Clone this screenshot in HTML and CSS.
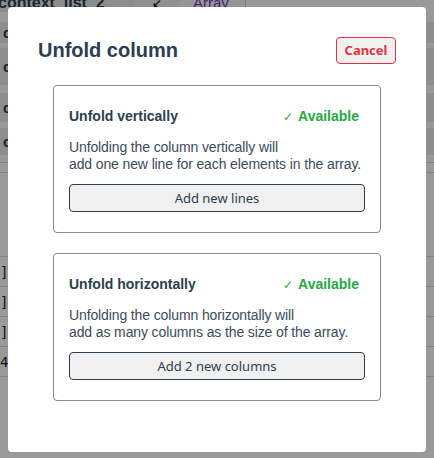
FILE: index.html
```html
<!DOCTYPE html>
<html>
<head>
<meta charset="utf-8">
<link rel="stylesheet" href="styles.css">
</head>
<body>
<div class="table">
  <div class="row r-head">
    <div class="cell c1"><span class="head-text">context_list_2</span></div>
    <div class="cell c2"><span class="arrow">↙</span></div>
    <div class="cell c3"><span class="type">Array</span></div>
  </div>
  <div class="row gap h10"></div>
  <div class="row shade h21"><span class="stub">co</span></div>
  <div class="row gap h5"></div>
  <div class="row shade h37"><span class="stub">c</span></div>
  <div class="row gap h8"></div>
  <div class="row shade h29"><span class="stub">c</span></div>
  <div class="row gap h6"></div>
  <div class="row shade h27"><span class="stub">c</span></div>
  <div class="row gap h8 line"></div>
  <div class="row gap h10 line"></div>
  <div class="row gap h84 line"></div>
  <div class="row gap h30 line"><span class="stub br">]</span></div>
  <div class="row gap h30 line"><span class="stub br">]</span></div>
  <div class="row gap h30 line"><span class="stub br">]</span></div>
  <div class="row gap h30 line"><span class="stub br">4 ]</span></div>
</div>

<div class="overlay">
  <div class="modal">
    <div class="modal-header">
      <h2 class="modal-title">Unfold column</h2>
      <button class="btn btn-cancel">Cancel</button>
    </div>
    <div class="cards">
      <div class="card">
        <div class="card-head">
          <span class="card-title">Unfold vertically</span>
          <span class="status"><span class="check">✓</span> Available</span>
        </div>
        <p class="card-text">Unfolding the column vertically will<br>add one new line for each elements in the array.</p>
        <button class="btn btn-action">Add new lines</button>
      </div>
      <div class="card">
        <div class="card-head">
          <span class="card-title">Unfold horizontally</span>
          <span class="status"><span class="check">✓</span> Available</span>
        </div>
        <p class="card-text">Unfolding the column horizontally will<br>add as many columns as the size of the array.</p>
        <button class="btn btn-action">Add 2 new columns</button>
      </div>
    </div>
  </div>
</div>
</body>
</html>
```

FILE: styles.css
```css
* { box-sizing: border-box; }
html, body { margin: 0; padding: 0; }
body {
  width: 434px;
  height: 458px;
  overflow: hidden;
  background: #fff;
  font-family: "Liberation Sans", Arial, sans-serif;
}

/* underlying table */
.table { width: 434px; }
.row { display: flex; overflow: hidden; }
.r-head { height: 12px; }
.cell { height: 12px; overflow: hidden; position: relative; }
.c1 { width: 135px; background: #ebebeb; }
.c2 { width: 45px; background: #f2f2f2; }
.c3 { width: 66px; background: #fafafa; border-right: 1px solid #d0d0d0; }
.head-text {
  display: block;
  margin-top: -6px;
  margin-left: -2px;
  font-weight: bold;
  font-size: 16px;
  color: #2c3e50;
}
.arrow { display: block; margin: -4px 0 0 17px; font-size: 12px; color: #000; }
.type { display: block; margin: -6px 0 0 13px; font-size: 15px; color: #6f42c1; }
.gap { background: #fff; }
.shade { background: #ebebeb; }
.line { border-bottom: 1px solid #d8d8d8; }
.h5 { height: 5px; } .h6 { height: 6px; } .h8 { height: 8px; } .h10 { height: 10px; }
.h21 { height: 21px; } .h27 { height: 27px; } .h29 { height: 29px; } .h30 { height: 30px; }
.h37 { height: 37px; } .h84 { height: 84px; }
.stub {
  align-self: center;
  padding-left: 3px;
  font-size: 15px;
  font-weight: bold;
  color: #2c3e50;
}
.stub.br { font-family: "DejaVu Sans Mono", monospace; font-weight: normal; font-size: 14px; color: #222; padding-left: 0; }

/* overlay + modal */
.overlay {
  position: fixed;
  inset: 0;
  background: rgba(0, 0, 0, 0.4);
  display: flex;
  align-items: center;
  justify-content: center;
}
.modal {
  width: 418px;
  background: #fff;
  border-radius: 4px;
  padding: 30px 30px 51px;
}
.modal-header {
  display: flex;
  justify-content: space-between;
  align-items: center;
  height: 27px;
}
.modal-title {
  margin: 0;
  font-size: 20px;
  font-weight: bold;
  color: #2c3e50;
  line-height: 24px;
}
.btn {
  font-family: "Noto Sans", "Open Sans", sans-serif;
  background: #f0f0f0;
  border-radius: 4px;
  cursor: pointer;
  padding: 0;
}
.btn-cancel {
  width: 60px;
  height: 27px;
  border: 1px solid #dc3545;
  color: #dc3545;
  font-weight: bold;
  font-size: 13px;
}
.cards {
  width: 328px;
  margin: 21px auto 0;
  display: flex;
  flex-direction: column;
  gap: 20px;
}
.card {
  border: 1px solid #8a8a8a;
  border-radius: 4px;
  padding: 22px 15px 20px;
  display: flex;
  flex-direction: column;
}
.card-head {
  display: flex;
  justify-content: space-between;
  align-items: baseline;
  line-height: 17px;
  font-size: 14px;
  font-weight: bold;
}
.card-title { color: #2c3e50; }
.status { color: #28a745; padding-right: 6px; }
.check { font-weight: normal; font-size: 12px; margin-right: 2px; }
.card-text {
  margin: 13px 0 11px;
  font-size: 14px;
  line-height: 17px;
  color: #3d4a5c;
  white-space: nowrap;
  letter-spacing: -0.12px;
}
.btn-action {
  height: 28px;
  border: 1px solid #2c3e50;
  color: #2c3e50;
  font-size: 13px;
}
```
